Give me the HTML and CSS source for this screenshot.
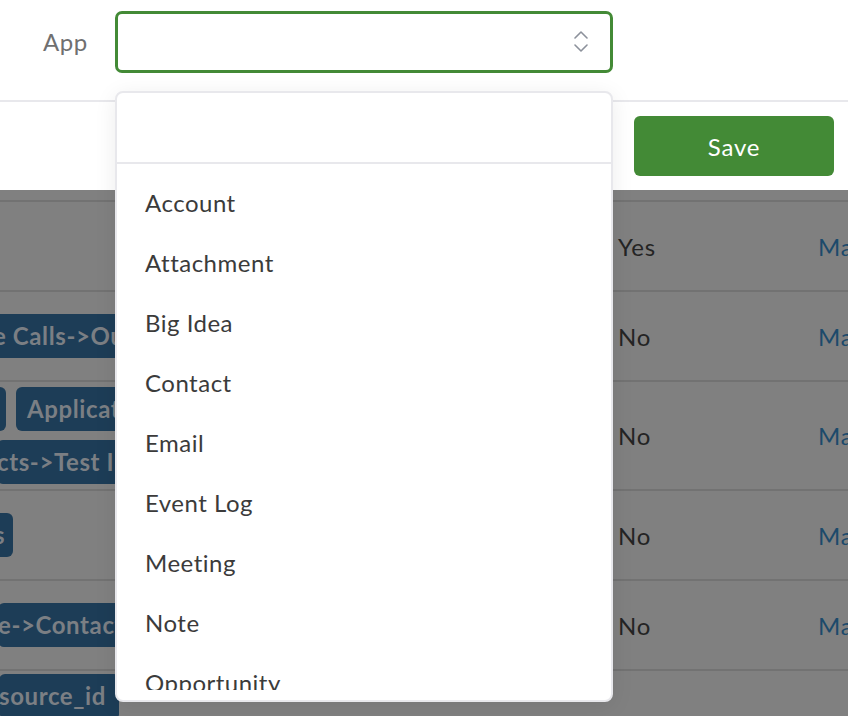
FILE: index.html
```html
<!DOCTYPE html>
<html>
<head>
<meta charset="utf-8">
<link rel="stylesheet" href="styles.css">
</head>
<body>
<div class="form-row">
  <label class="label">App</label>
  <div class="select">
    <svg class="chev" width="14" height="22" viewBox="0 0 14 22"><path d="M1 7 L7 1 L13 7" /><path d="M1 14 L7 20 L13 14" /></svg>
  </div>
</div>
<div class="actions"><button class="save">Save</button></div>
<div class="table">
  <div class="row h90">
    <div class="tags"></div>
    <div class="val">Yes</div>
    <div class="link">Manage</div>
  </div>
  <div class="row h90">
    <div class="tags"><div class="line"><span class="tag off6">e Calls-&gt;Outbound</span></div></div>
    <div class="val">No</div>
    <div class="link">Manage</div>
  </div>
  <div class="row h109">
    <div class="tags">
      <div class="line"><span class="tag stub"></span><span class="tag">Applications</span></div>
      <div class="line"><span class="tag off3">cts-&gt;Test Import</span></div>
    </div>
    <div class="val">No</div>
    <div class="link">Manage</div>
  </div>
  <div class="row h90">
    <div class="tags"><div class="line"><span class="tag tail">s</span></div></div>
    <div class="val">No</div>
    <div class="link">Manage</div>
  </div>
  <div class="row h90">
    <div class="tags"><div class="line"><span class="tag off2">e-&gt;Contacts</span></div></div>
    <div class="val">No</div>
    <div class="link">Manage</div>
  </div>
  <div class="row last">
    <div class="tags top"><div class="line"><span class="tag off1 short">source_id</span></div></div>
    <div class="val"></div>
    <div class="link"></div>
  </div>
</div>
<div class="dropdown">
  <div class="search"></div>
  <ul class="list">
    <li>Account</li>
    <li>Attachment</li>
    <li>Big Idea</li>
    <li>Contact</li>
    <li>Email</li>
    <li>Event Log</li>
    <li>Meeting</li>
    <li>Note</li>
    <li>Opportunity</li>
    <li>Task</li>
  </ul>
</div>
</body>
</html>
```
FILE: styles.css
```css
html, body {
  margin: 0;
  padding: 0;
}
body {
  width: 848px;
  height: 716px;
  overflow: hidden;
  position: relative;
  background: #fff;
  font-family: Lato, "Open Sans", sans-serif;
  font-size: 24px;
}
.form-row {
  height: 102px;
  box-sizing: border-box;
  border-bottom: 2px solid #e8e8ec;
  display: flex;
  align-items: flex-start;
  padding: 11px 0 0 43px;
}
.label {
  width: 72px;
  line-height: 62px;
  color: #707070;
  font-size: 24px;
  letter-spacing: 0.6px;
}
.select {
  width: 498px;
  height: 62px;
  box-sizing: border-box;
  border: 3px solid #438a36;
  border-radius: 7px;
  display: flex;
  justify-content: flex-end;
  align-items: center;
  padding-right: 22px;
}
.chev path {
  fill: none;
  stroke: #8c919b;
  stroke-width: 1.6;
  stroke-linecap: round;
  stroke-linejoin: round;
}
.actions {
  height: 88px;
  display: flex;
  justify-content: flex-end;
  align-items: center;
  padding-right: 14px;
}
.save {
  width: 200px;
  height: 60px;
  border: none;
  border-radius: 6px;
  background: #438a36;
  color: #fff;
  font-family: Lato, "Open Sans", sans-serif;
  font-size: 24px;
  letter-spacing: 0.8px;
}
.table {
  background: #808080;
  height: 526px;
  padding-top: 10px;
  box-sizing: border-box;
  overflow: hidden;
}
.row {
  display: grid;
  grid-template-columns: 119px 499px 200px 1fr;
  border-top: 2px solid #727272;
  box-sizing: border-box;
  white-space: nowrap;
  overflow: hidden;
}
.h90 { height: 90px; }
.h109 { height: 109px; }
.last { height: 60px; }
.tags {
  grid-column: 1;
  display: flex;
  flex-direction: column;
  justify-content: center;
  gap: 9px;
  overflow: hidden;
}
.tags.top {
  justify-content: flex-start;
  padding-top: 3px;
}
.line {
  display: flex;
  gap: 10px;
}
.tag {
  display: inline-block;
  flex: none;
  height: 44px;
  line-height: 44px;
  padding: 0 11px;
  border-radius: 6px;
  background: #1d3d57;
  color: #7b7f84;
  font-weight: 700;
  font-size: 24px;
  letter-spacing: 0.6px;
}
.off6 { margin-left: -7px; padding-left: 0; }
.off3 { margin-left: -3px; padding-left: 0; }
.off2 { margin-left: -2px; padding-left: 0; }
.off1 { margin-left: -1px; padding-left: 0; }
.stub { width: 6px; padding: 0; margin-left: 0; border-radius: 0 6px 6px 0; }
.tail { margin-left: -6px; padding: 0 8px 0 0; }
.short { padding-right: 14px; }
.val {
  grid-column: 3;
  display: flex;
  align-items: center;
  color: #242424;
  letter-spacing: 0.9px;
}
.link {
  grid-column: 4;
  display: flex;
  align-items: center;
  color: #1c4a6b;
  letter-spacing: 0.8px;
}
.dropdown {
  position: absolute;
  left: 115px;
  top: 91px;
  width: 498px;
  height: 611px;
  box-sizing: border-box;
  background: #fff;
  border: 2px solid #e8e8ec;
  border-radius: 8px;
  box-shadow: 0 4px 22px rgba(0, 0, 0, 0.08);
  display: flex;
  flex-direction: column;
}
.search {
  height: 71px;
  box-sizing: border-box;
  border-bottom: 2px solid #e8e8ec;
  flex: none;
}
.list {
  list-style: none;
  margin: 0 0 10px 0;
  padding: 9px 0 0 0;
  flex: 1;
  overflow: hidden;
}
.list li {
  height: 60px;
  line-height: 60px;
  padding-left: 28px;
  color: #3b3b3b;
  letter-spacing: 0.5px;
}
```
